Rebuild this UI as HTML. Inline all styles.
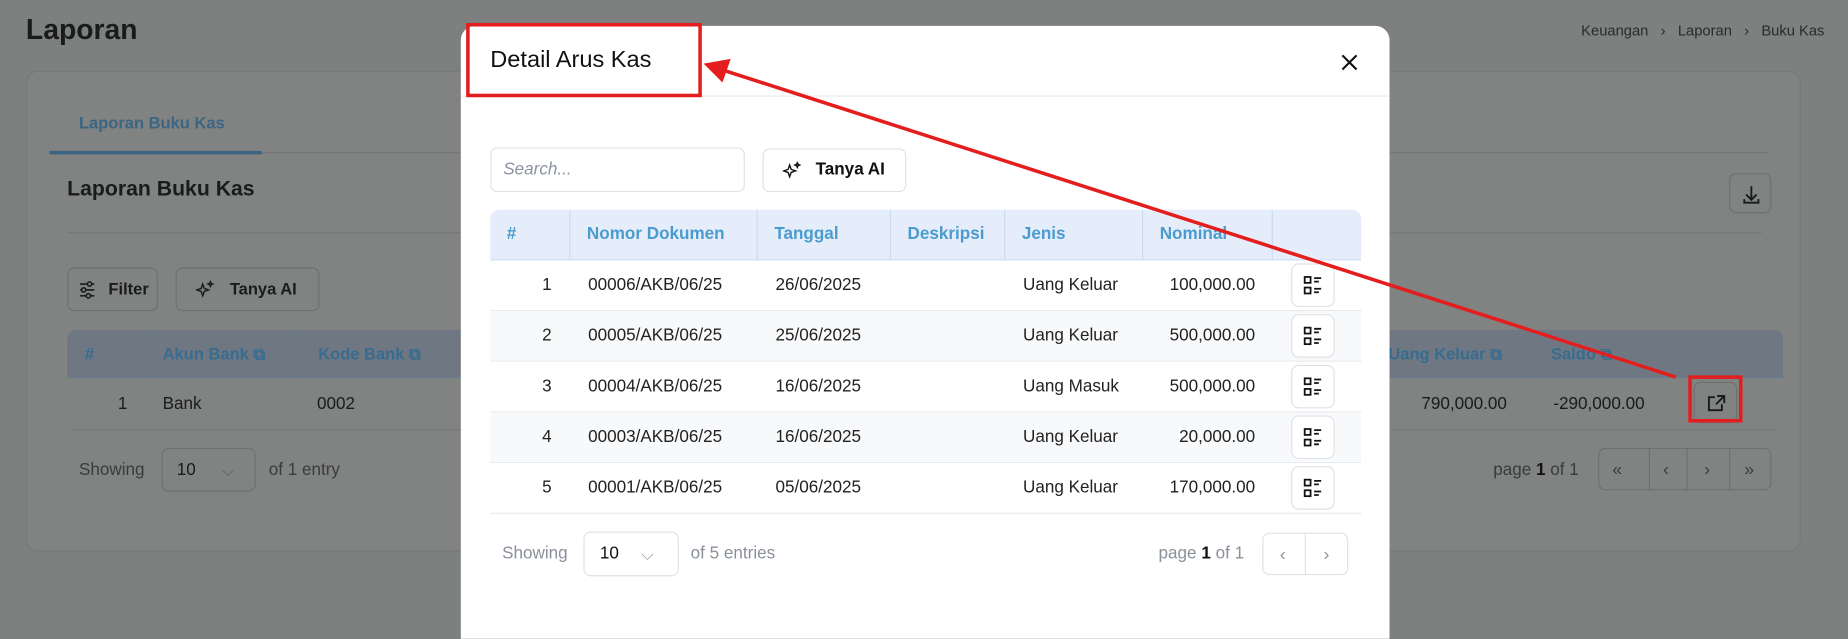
<!DOCTYPE html>
<html><head><meta charset="utf-8">
<style>
*{box-sizing:border-box;margin:0;padding:0}
html,body{width:1848px;height:624px;overflow:hidden;background:#7e7f7f}
body{font-family:"Liberation Sans",sans-serif;color:#1b1d20}
#w{position:absolute;left:0;top:0;width:1568px;height:530px;transform:scale(1.17857);transform-origin:0 0}
.a{position:absolute;white-space:nowrap}
.bg{color:#1a1b1d}
.btnb{position:absolute;border:1px solid #6f7070;border-radius:6px}
.btnw{position:absolute;border:1px solid #dfe2e6;border-radius:6px;background:#fff}
.th{position:absolute;top:0;height:42px;line-height:42px;font-size:14.5px;font-weight:bold;color:#4b9bd0;border-right:1px solid #c9dcf2;padding-left:14px}
.tr{position:absolute;left:416px;width:739px;height:43px;border-bottom:1px solid #e8eaee;font-size:14.5px;color:#222}
.tr span{position:absolute;top:13px}
</style></head><body>
<div id="w">
<div class="a bg" style="left:22px;top:12px;font-size:24px;font-weight:bold">Laporan</div>
<div class="a" style="right:20px;top:19px;font-size:12.5px;color:#2a2b2c">Keuangan &nbsp;&nbsp;›&nbsp;&nbsp; Laporan &nbsp;&nbsp;›&nbsp;&nbsp; Buku Kas</div>
<div class="a" style="left:22px;top:60px;width:1506px;height:408px;background:#818282;border:1px solid #777878;border-radius:10px"></div>
<div class="a" style="left:67px;top:96px;font-size:14px;font-weight:bold;color:#3b6683">Laporan Buku Kas</div>
<div class="a" style="left:42px;top:129px;width:1458px;height:1px;background:#757676"></div>
<div class="a" style="left:42px;top:128px;width:180px;height:3px;background:#3c6480"></div>
<div class="a bg" style="left:57px;top:150px;font-size:18px;font-weight:bold">Laporan Buku Kas</div>
<div class="a" style="left:57px;top:197px;width:1438px;height:1px;background:#767777"></div>
<div class="btnb" style="left:1467px;top:147px;width:36px;height:34px"><svg width="36" height="34" viewBox="0 0 36 34"><path d="M18 10v11M13.5 17l4.5 4.5 4.5-4.5M12 21v3h12v-3" fill="none" stroke="#1a1b1d" stroke-width="1.6"/></svg></div>
<div class="btnb" style="left:57px;top:227px;width:77px;height:37px"><svg class="a" style="left:8px;top:10px" width="16" height="16" viewBox="0 0 16 16"><path d="M2 3h12M2 8h12M2 13h12" stroke="#1a1b1d" stroke-width="1.4"/><circle cx="10" cy="3" r="1.8" fill="#818282" stroke="#1a1b1d" stroke-width="1.3"/><circle cx="5" cy="8" r="1.8" fill="#818282" stroke="#1a1b1d" stroke-width="1.3"/><circle cx="9" cy="13" r="1.8" fill="#818282" stroke="#1a1b1d" stroke-width="1.3"/></svg><span class="a bg" style="left:34px;top:9px;font-size:14px;font-weight:bold">Filter</span></div>
<div class="btnb" style="left:149px;top:227px;width:122px;height:37px"><svg class="a" style="left:16px;top:10px" width="16" height="16" viewBox="0 0 16 16"><path d="M6 3l1.3 3.7L11 8l-3.7 1.3L6 13l-1.3-3.7L1 8l3.7-1.3z M12.5 1l.6 1.4 1.4.6-1.4.6-.6 1.4-.6-1.4-1.4-.6 1.4-.6z" fill="none" stroke="#1a1b1d" stroke-width="1.2"/></svg><span class="a bg" style="left:45px;top:9px;font-size:14px;font-weight:bold">Tanya AI</span></div>
<div class="a" style="left:57px;top:280px;width:1456px;height:41px;background:#6f7782;border-radius:8px 8px 0 0;border-bottom:1px solid #677f94"></div>
<div class="a" style="left:72px;top:292px;font-size:14px;font-weight:bold;color:#366c90">#</div>
<div class="a" style="left:124px;top:280px;width:1px;height:41px;background:#68788a"></div>
<div class="a" style="left:138px;top:292px;font-size:14px;font-weight:bold;color:#366c90">Akun Bank ⧉</div>
<div class="a" style="left:256px;top:280px;width:1px;height:41px;background:#68788a"></div>
<div class="a" style="left:270px;top:292px;font-size:14px;font-weight:bold;color:#366c90">Kode Bank ⧉</div>
<div class="a" style="left:386px;top:280px;width:1px;height:41px;background:#68788a"></div>
<div class="a" style="left:1178px;top:292px;font-size:14px;font-weight:bold;color:#366c90">Uang Keluar ⧉</div>
<div class="a" style="left:1300px;top:280px;width:1px;height:41px;background:#68788a"></div>
<div class="a" style="left:1316px;top:292px;font-size:14px;font-weight:bold;color:#366c90">Saldo ⧉</div>
<div class="a" style="left:1420px;top:280px;width:1px;height:41px;background:#68788a"></div>
<div class="a" style="left:62px;top:364px;width:1446px;height:1px;background:#767777"></div>
<div class="a bg" style="left:100px;top:335px;font-size:14.5px">1</div>
<div class="a bg" style="left:138px;top:335px;font-size:14.5px">Bank</div>
<div class="a bg" style="left:269px;top:335px;font-size:14.5px">0002</div>
<div class="a bg" style="left:1206px;top:335px;font-size:14.5px">790,000.00</div>
<div class="a bg" style="left:1318px;top:335px;font-size:14.5px">-290,000.00</div>
<div class="btnb" style="left:1437px;top:324px;width:37px;height:35px"><svg width="37" height="35" viewBox="0 0 37 35"><path d="M17 12h-5v11h11v-5M19 11h6v6M25 11l-7 7" fill="none" stroke="#1a1b1d" stroke-width="1.6"/></svg></div>
<div class="a" style="left:67px;top:391px;font-size:14.5px;color:#3a3b3c">Showing</div>
<div class="btnb" style="left:137px;top:380px;width:80px;height:37px"><span class="a bg" style="left:12px;top:10px;font-size:14.5px">10</span><span class="a" style="left:50px;top:10px;color:#5c5d5e;font-size:14px">⌵</span></div>
<div class="a" style="left:228px;top:391px;font-size:14.5px;color:#3a3b3c">of 1 entry</div>
<div class="a" style="left:1267px;top:391px;font-size:14.5px;color:#3a3b3c">page <b style="color:#111">1</b> of 1</div>
<div class="btnb" style="left:1356px;top:380px;width:147px;height:36px"></div>
<div class="a" style="left:1399px;top:380px;width:1px;height:36px;background:#6f7070"></div>
<div class="a" style="left:1431px;top:380px;width:1px;height:36px;background:#6f7070"></div>
<div class="a" style="left:1467px;top:380px;width:1px;height:36px;background:#6f7070"></div>
<div class="a" style="left:1368px;top:390px;font-size:15px;color:#3a3b3c">«</div>
<div class="a" style="left:1411px;top:390px;font-size:15px;color:#3a3b3c">‹</div>
<div class="a" style="left:1446px;top:390px;font-size:15px;color:#3a3b3c">›</div>
<div class="a" style="left:1480px;top:390px;font-size:15px;color:#3a3b3c">»</div>

<div class="a" style="left:391px;top:22px;width:788px;height:520px;background:#fff;border-radius:12px 12px 0 0"></div>
<div class="a" style="left:416px;top:40px;font-size:20px;color:#111">Detail Arus Kas</div>
<svg class="a" style="left:1137px;top:45px" width="16" height="16" viewBox="0 0 16 16"><path d="M2 2l12 12M14 2L2 14" stroke="#111" stroke-width="1.8"/></svg>
<div class="a" style="left:391px;top:81px;width:788px;height:1px;background:#e8eaee"></div>
<div class="btnw" style="left:416px;top:125px;width:216px;height:38px"><span class="a" style="left:10px;top:10px;font-size:14.5px;font-style:italic;color:#8c93a0">Search...</span></div>
<div class="btnw" style="left:647px;top:126px;width:122px;height:37px"><svg class="a" style="left:16px;top:10px" width="16" height="16" viewBox="0 0 16 16"><path d="M6 3l1.3 3.7L11 8l-3.7 1.3L6 13l-1.3-3.7L1 8l3.7-1.3z M12.5 1l.6 1.4 1.4.6-1.4.6-.6 1.4-.6-1.4-1.4-.6 1.4-.6z" fill="none" stroke="#111" stroke-width="1.2"/></svg><span class="a" style="left:44px;top:9px;font-size:14.5px;font-weight:bold;color:#111">Tanya AI</span></div>
<div class="a" style="left:416px;top:178px;width:739px;height:43px;background:#e4edf9;border-radius:8px 8px 0 0;border-bottom:1px solid #c9dcf2">
<div class="th" style="left:0;width:68px">#</div>
<div class="th" style="left:68px;width:159px">Nomor Dokumen</div>
<div class="th" style="left:227px;width:113px">Tanggal</div>
<div class="th" style="left:340px;width:97px">Deskripsi</div>
<div class="th" style="left:437px;width:117px">Jenis</div>
<div class="th" style="left:554px;width:110px">Nominal</div>
</div>
<div class="tr" style="top:221px;background:#fff"><span style="left:44px">1</span><span style="left:83px">00006/AKB/06/25</span><span style="left:242px">26/06/2025</span><span style="left:452px">Uang Keluar</span><span style="right:90px">100,000.00</span></div>
<div class="tr" style="top:264px;background:#f8f9fb"><span style="left:44px">2</span><span style="left:83px">00005/AKB/06/25</span><span style="left:242px">25/06/2025</span><span style="left:452px">Uang Keluar</span><span style="right:90px">500,000.00</span></div>
<div class="tr" style="top:307px;background:#fff"><span style="left:44px">3</span><span style="left:83px">00004/AKB/06/25</span><span style="left:242px">16/06/2025</span><span style="left:452px">Uang Masuk</span><span style="right:90px">500,000.00</span></div>
<div class="tr" style="top:350px;background:#f8f9fb"><span style="left:44px">4</span><span style="left:83px">00003/AKB/06/25</span><span style="left:242px">16/06/2025</span><span style="left:452px">Uang Keluar</span><span style="right:90px">20,000.00</span></div>
<div class="tr" style="top:393px;background:#fff"><span style="left:44px">5</span><span style="left:83px">00001/AKB/06/25</span><span style="left:242px">05/06/2025</span><span style="left:452px">Uang Keluar</span><span style="right:90px">170,000.00</span></div>
<svg class="a" style="left:0;top:0" width="1568" height="530">
<defs><g id="li"><rect x="0" y="0" width="36" height="36" rx="6" fill="#fff" stroke="#dfe2e6"/><rect x="11" y="11" width="5" height="5" fill="none" stroke="#111" stroke-width="1.5"/><rect x="11" y="20" width="5" height="5" fill="none" stroke="#111" stroke-width="1.5"/><path d="M19 12h6M19 15h4M19 21h6M19 24h4" stroke="#111" stroke-width="1.5"/></g></defs>
<use href="#li" x="1096" y="224"/><use href="#li" x="1096" y="267"/><use href="#li" x="1096" y="310"/><use href="#li" x="1096" y="353"/><use href="#li" x="1096" y="396"/>
</svg>
<div class="a" style="left:426px;top:462px;font-size:14.5px;color:#8a909a">Showing</div>
<div class="btnw" style="left:495px;top:451px;width:81px;height:38px"><span class="a" style="left:13px;top:10px;font-size:14.5px;color:#111">10</span><span class="a" style="left:48px;top:10px;color:#9aa0a8;font-size:14px">⌵</span></div>
<div class="a" style="left:586px;top:462px;font-size:14.5px;color:#8a909a">of 5 entries</div>
<div class="a" style="left:983px;top:462px;font-size:14.5px;color:#8a909a">page <b style="color:#111">1</b> of 1</div>
<div class="btnw" style="left:1071px;top:452px;width:73px;height:36px"></div>
<div class="a" style="left:1107px;top:452px;width:1px;height:36px;background:#dfe2e6"></div>
<div class="a" style="left:1086px;top:462px;font-size:15px;color:#8a909a">‹</div>
<div class="a" style="left:1123px;top:462px;font-size:15px;color:#8a909a">›</div>

<svg class="a" style="left:0;top:0" width="1568" height="530">
<rect x="397" y="21" width="197" height="60" fill="none" stroke="#e41e1e" stroke-width="3"/>
<rect x="1434" y="320" width="43" height="37" fill="none" stroke="#e41e1e" stroke-width="3"/>
<line x1="1422" y1="320" x2="612" y2="59" stroke="#e41e1e" stroke-width="3"/>
<polygon points="597,54 620,50 613,70" fill="#e41e1e"/>
</svg>
</div>
</body></html>
